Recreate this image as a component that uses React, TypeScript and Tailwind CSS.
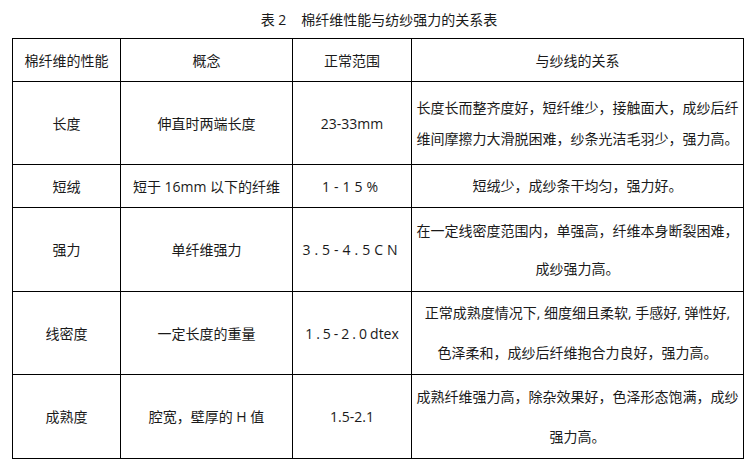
const rows = [
  {
    h: 'h-[83px]',
    name: '长度',
    concept: '伸直时两端长度',
    range: <span>23-33mm</span>,
    lines: ['长度长而整齐度好，短纤维少，接触面大，成纱后纤', '维间摩擦力大滑脱困难，纱条光洁毛羽少，强力高。'],
    leading: 'leading-[31px]',
  },
  {
    h: 'h-[43px]',
    name: '短绒',
    concept: '短于 16mm 以下的纤维',
    range: <span className="tracking-[4px]">1-15%</span>,
    lines: ['短绒少，成纱条干均匀，强力好。'],
    leading: 'leading-[20px]',
  },
  {
    h: 'h-[84px]',
    name: '强力',
    concept: '单纤维强力',
    range: <span className="tracking-[4px]">3.5-4.5CN</span>,
    lines: ['在一定线密度范围内，单强高，纤维本身断裂困难，', '成纱强力高。'],
    leading: 'leading-[38px]',
  },
  {
    h: 'h-[83px]',
    name: '线密度',
    concept: '一定长度的重量',
    range: (
      <span>
        <span className="tracking-[3px]">1.5-2.0</span>dtex
      </span>
    ),
    lines: ['正常成熟度情况下, 细度细且柔软, 手感好, 弹性好,', '色泽柔和，成纱后纤维抱合力良好，强力高。'],
    leading: 'leading-[40px]',
  },
  {
    h: 'h-[84px]',
    name: '成熟度',
    concept: '腔宽，壁厚的 H 值',
    range: <span>1.5-2.1</span>,
    lines: ['成熟纤维强力高，除杂效果好，色泽形态饱满，成纱', '强力高。'],
    leading: 'leading-[40px]',
  },
];

export default function App() {
  return (
    <div
      className="w-[756px] h-[474px] bg-white text-[14px] text-[#1a1a1a]"
      style={{ fontFamily: '"Open Sans", "Noto Sans CJK SC", sans-serif' }}
    >
      <div className="flex h-[38px] items-center justify-center pl-[2px]">
        <span>表 2</span>
        <span className="ml-[15px]">棉纤维性能与纺纱强力的关系表</span>
      </div>

      <table className="ml-[12px] w-[731px] table-fixed border-collapse">
        <colgroup>
          <col className="w-[108px]" />
          <col className="w-[172px]" />
          <col className="w-[119px]" />
          <col className="w-[332px]" />
        </colgroup>
        <thead>
          <tr className="h-[43px]">
            <th className="border border-black p-0 text-center font-normal">棉纤维的性能</th>
            <th className="border border-black p-0 text-center font-normal">概念</th>
            <th className="border border-black p-0 text-center font-normal">正常范围</th>
            <th className="border border-black p-0 text-center font-normal">与纱线的关系</th>
          </tr>
        </thead>
        <tbody>
          {rows.map((r) => (
            <tr key={r.name} className={r.h}>
              <td className="border border-black p-0 text-center">{r.name}</td>
              <td className="border border-black p-0 text-center whitespace-nowrap">{r.concept}</td>
              <td className="border border-black p-0 text-center whitespace-nowrap">{r.range}</td>
              <td className={`border border-black p-0 text-center whitespace-nowrap ${r.leading}`}>
                {r.lines.map((l) => (
                  <div key={l}>{l}</div>
                ))}
              </td>
            </tr>
          ))}
        </tbody>
      </table>
    </div>
  );
}
